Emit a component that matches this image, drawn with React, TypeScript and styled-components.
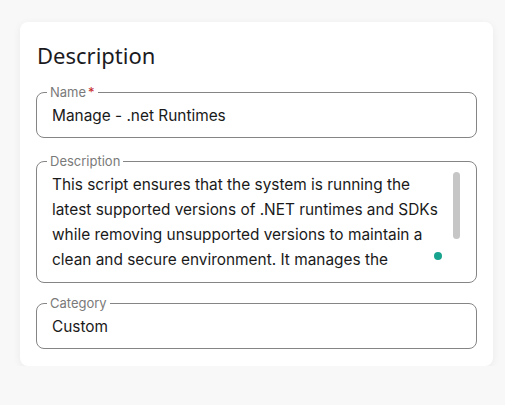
import React from "react";
import styled, { createGlobalStyle } from "styled-components";

const GlobalStyle = createGlobalStyle`
  *, *::before, *::after { box-sizing: border-box; }
  html, body { margin: 0; padding: 0; }
  body {
    background: #f8f8f8;
    font-family: "Inter", "Noto Sans", sans-serif;
    color: #1a1a1a;
  }
`;

const Page = styled.div`
  padding: 22px 0 0 20px;
`;

const Card = styled.section`
  width: 473px;
  background: #ffffff;
  border-radius: 8px;
  box-shadow: 0 2px 8px rgba(0, 0, 0, 0.06);
  padding: 18px 16px 17px;
  display: flex;
  flex-direction: column;
`;

const Title = styled.h2`
  margin: 0 0 15px 1px;
  font-family: "Noto Sans", "Open Sans", sans-serif;
  font-size: 22px;
  font-weight: 400;
  line-height: 30px;
  color: #1b1b1f;
`;

const Field = styled.fieldset<{ $gap?: number }>`
  margin: 0 0 ${(p) => p.$gap ?? 0}px;
  min-inline-size: 0;
  border: 1px solid #858585;
  border-radius: 8px;
  padding: 3px 15px 9px;
  position: relative;
`;

const Legend = styled.legend`
  margin-left: -5px;
  padding: 0 3px;
  font-size: 13px;
  line-height: 15px;
  color: #7a7a7a;
`;

const Required = styled.span`
  color: #c62828;
  margin-left: 2px;
`;

const Value = styled.div`
  font-size: 15.4px;
  line-height: 25px;
  color: #1a1a1a;
`;

const TextArea = styled.div`
  position: relative;
  height: 100px;
  margin-bottom: 1px;
  padding-right: 16px;
  font-size: 15.4px;
  line-height: 25px;
  color: #1a1a1a;
`;

const Clip = styled.div`
  height: 100%;
  overflow: hidden;
`;

const Thumb = styled.div`
  position: absolute;
  right: 1px;
  top: 0;
  width: 7px;
  height: 67px;
  border-radius: 4px;
  background: #c6c6c6;
`;

const StatusDot = styled.span`
  position: absolute;
  right: 19px;
  top: 80px;
  width: 8px;
  height: 8px;
  border-radius: 50%;
  background: #17a38d;
`;

const description =
  "This script ensures that the system is running the latest supported versions of .NET runtimes and SDKs while removing unsupported versions to maintain a clean and secure environment. It manages the installation and removal of runtimes across the machine.";

export default function App() {
  return (
    <>
      <GlobalStyle />
      <Page>
        <Card>
          <Title>Description</Title>
          <Field $gap={16}>
            <Legend>
              Name<Required>*</Required>
            </Legend>
            <Value>Manage - .net Runtimes</Value>
          </Field>
          <Field $gap={13}>
            <Legend>Description</Legend>
            <TextArea>
              <Clip>{description}</Clip>
              <Thumb />
              <StatusDot />
            </TextArea>
          </Field>
          <Field>
            <Legend>Category</Legend>
            <Value>Custom</Value>
          </Field>
        </Card>
      </Page>
    </>
  );
}
